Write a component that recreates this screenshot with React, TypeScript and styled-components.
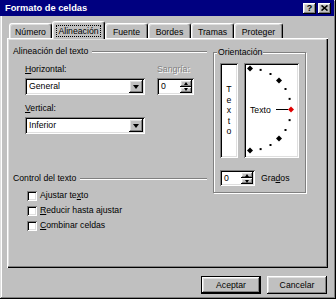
import { createGlobalStyle, css, styled } from "styled-components";

const GlobalStyle = createGlobalStyle`
  html, body {
    margin: 0;
    padding: 0;
    background: #c0c0c0;
  }
  body {
    font-family: "Liberation Sans", Arial, sans-serif;
    font-size: 8.7px;
    color: #000;
  }
`;

const raised = css`
  box-shadow: inset -1px -1px #000, inset 1px 1px #fff, inset -2px -2px #808080, inset 2px 2px #dfdfdf;
`;

const sunken = css`
  box-shadow: inset 1px 1px #808080, inset -1px -1px #fff, inset 2px 2px #000, inset -2px -2px #dfdfdf;
`;

const Window = styled.div`
  width: 336px;
  height: 299px;
  box-sizing: border-box;
  padding: 0 2px 2px 0;
  background: #c0c0c0;
  box-shadow: inset -1px -1px #000, inset 1px 1px #dfdfdf, inset -2px -2px #808080, inset 2px 2px #fff;
  display: flex;
  flex-direction: column;
`;

const TitleBar = styled.div`
  height: 16px;
  background: #000080;
  color: #fff;
  display: flex;
  align-items: center;
  padding: 0 3px 0 5px;
  font-weight: bold;
  font-size: 9.3px;
`;

const Title = styled.span`
  flex: 1;
  line-height: 16px;
`;

const TitleButtons = styled.div`
  display: flex;
  gap: 2px;
`;

const TitleButton = styled.div`
  width: 13px;
  height: 11px;
  background: #c0c0c0;
  ${raised}
  color: #000;
  display: flex;
  align-items: center;
  justify-content: center;
  font-size: 9px;
  line-height: 11px;
`;

const Body = styled.div`
  flex: 1;
  display: flex;
  flex-direction: column;
  padding: 5px 6px 0 7px;
`;

const TabRow = styled.div`
  display: flex;
  align-items: flex-end;
  height: 17px;
  padding-left: 2px;
  position: relative;
  z-index: 1;
`;

const Tab = styled.div<{ $w: number; $active?: boolean }>`
  width: ${(p) => p.$w}px;
  height: ${(p) => (p.$active ? 18 : 15)}px;
  margin-bottom: ${(p) => (p.$active ? -1 : 0)}px;
  box-sizing: border-box;
  padding-top: ${(p) => (p.$active ? 4 : 3)}px;
  background: #c0c0c0;
  border: 1px solid;
  border-color: #fff #000 transparent #fff;
  border-bottom: none;
  border-radius: 3px 3px 0 0;
  box-shadow: inset -1px 0 #808080, inset 1px 1px #dfdfdf;
  text-align: center;
  line-height: 11px;
`;

const Focus = styled.span`
  outline: 1px dotted #000;
  outline-offset: 0;
  padding: 0 1px;
`;

const Panel = styled.div`
  position: relative;
  z-index: 0;
  width: 321px;
  height: 230px;
  box-sizing: border-box;
  padding: 8px 0 0 6px;
  background: #c0c0c0;
  box-shadow: inset 1px 1px #fff, inset -1px -1px #000, inset -2px -2px #808080, inset 2px 2px #dfdfdf;
  display: grid;
  grid-template-columns: 194px 93px;
  column-gap: 6px;
  align-items: start;
`;

const Column = styled.div`
  display: flex;
  flex-direction: column;
`;

const SectionHeader = styled.div<{ $top?: number }>`
  display: flex;
  align-items: center;
  height: 11px;
  line-height: 11px;
  margin-top: ${(p) => p.$top ?? 0}px;
  &::after {
    content: "";
    flex: 1;
    height: 0;
    margin-left: 4px;
    border-top: 1px solid #808080;
    border-bottom: 1px solid #fff;
  }
`;

const FieldsRow = styled.div<{ $top: number }>`
  display: flex;
  gap: 12px;
  padding-left: 12px;
  margin-top: ${(p) => p.$top}px;
`;

const FieldGroup = styled.div`
  display: flex;
  flex-direction: column;
  gap: 3px;
`;

const Label = styled.span<{ $disabled?: boolean }>`
  line-height: 11px;
  height: 11px;
  white-space: nowrap;
  color: ${(p) => (p.$disabled ? "#808080" : "#000")};
  text-shadow: ${(p) => (p.$disabled ? "1px 1px 0 #fff" : "none")};
`;

const Combo = styled.div`
  width: 120px;
  height: 17px;
  box-sizing: border-box;
  padding: 2px;
  background: #fff;
  ${sunken}
  display: flex;
  align-items: center;
`;

const ComboText = styled.span`
  flex: 1;
  padding-left: 2px;
  line-height: 13px;
`;

const DropButton = styled.div`
  width: 14px;
  height: 13px;
  background: #c0c0c0;
  ${raised}
  display: flex;
  align-items: center;
  justify-content: center;
  &::before {
    content: "";
    border-left: 3.5px solid transparent;
    border-right: 3.5px solid transparent;
    border-top: 4px solid #000;
  }
`;

const Spinner = styled.div<{ $w: number; $h: number }>`
  width: ${(p) => p.$w}px;
  height: ${(p) => p.$h}px;
  box-sizing: border-box;
  padding: 2px;
  background: #fff;
  ${sunken}
  display: flex;
`;

const SpinValue = styled.span`
  flex: 1;
  padding-left: 2px;
  align-self: center;
  line-height: 11px;
`;

const SpinButtons = styled.div`
  width: 12px;
  display: flex;
  flex-direction: column;
`;

const SpinButton = styled.div<{ $down?: boolean }>`
  flex: 1;
  background: #c0c0c0;
  ${raised}
  display: flex;
  align-items: center;
  justify-content: center;
  &::before {
    content: "";
    border-left: 2.5px solid transparent;
    border-right: 2.5px solid transparent;
    ${(p) => (p.$down ? "border-top: 3px solid #000;" : "border-bottom: 3px solid #000;")}
  }
`;

const CheckList = styled.div`
  display: flex;
  flex-direction: column;
  margin-top: 4px;
  padding-left: 14px;
`;

const CheckRow = styled.label`
  height: 15px;
  display: flex;
  align-items: center;
  gap: 3px;
  line-height: 11px;
`;

const CheckBox = styled.span`
  width: 10px;
  height: 10px;
  background: #fff;
  ${sunken}
`;

const Group = styled.div`
  margin-top: 6px;
  border: 1px solid #808080;
  box-shadow: 1px 1px 0 #fff, inset 1px 1px 0 #fff;
  padding: 0 6px 6px 6px;
  display: flex;
  flex-direction: column;
`;

const GroupLabel = styled.span`
  align-self: flex-start;
  margin: -6px 0 0 -3px;
  padding: 0 1px;
  background: #c0c0c0;
  line-height: 11px;
`;

const DialRow = styled.div`
  display: flex;
  gap: 6px;
  margin-top: 5px;
`;

const PreviewBox = styled.div<{ $w: number }>`
  width: ${(p) => p.$w}px;
  height: 95px;
  box-sizing: border-box;
  padding: 2px;
  background: #fff;
  ${sunken}
`;

const VerticalText = styled.div`
  height: 100%;
  display: flex;
  flex-direction: column;
  align-items: center;
  justify-content: center;
  line-height: 10.5px;
`;

const SpinRow = styled.div`
  display: flex;
  align-items: center;
  gap: 6px;
  margin-top: 12px;
`;

const ButtonRow = styled.div`
  display: flex;
  justify-content: flex-end;
  gap: 6px;
  margin-top: 8px;
  padding-right: 1px;
`;

const Button = styled.div<{ $default?: boolean }>`
  width: 60px;
  height: 18px;
  background: #c0c0c0;
  display: flex;
  align-items: center;
  justify-content: center;
  line-height: 11px;
  box-shadow: ${(p) =>
    p.$default
      ? "inset 0 0 0 1px #000, inset -2px -2px #000, inset 2px 2px #fff, inset -3px -3px #808080, inset 3px 3px #dfdfdf"
      : "inset -1px -1px #000, inset 1px 1px #fff, inset -2px -2px #808080, inset 2px 2px #dfdfdf"};
`;

const tabs = [
  { name: "Número", w: 43 },
  { name: "Alineación", w: 53, active: true },
  { name: "Fuente", w: 43 },
  { name: "Bordes", w: 43 },
  { name: "Tramas", w: 43 },
  { name: "Proteger", w: 49 },
];

function Dial() {
  const cx = 4;
  const cy = 44.5;
  const r = 41;
  const marks = [];
  for (let a = -90; a <= 90; a += 15) {
    const rad = (a * Math.PI) / 180;
    const x = cx + r * Math.cos(rad);
    const y = cy + r * Math.sin(rad);
    if (a % 45 === 0) {
      const s = 3;
      marks.push(
        <polygon
          key={a}
          points={`${x},${y - s} ${x + s},${y} ${x},${y + s} ${x - s},${y}`}
          fill={a === 0 ? "#e00000" : "#000"}
        />
      );
    } else {
      marks.push(<rect key={a} x={x - 1} y={y - 1} width={2} height={2} fill="#000" />);
    }
  }
  return (
    <svg width="51" height="91" viewBox="0 0 51 91">
      {marks}
      <text x="4" y="47.5" fontSize="8.7" fontFamily="Liberation Sans, Arial, sans-serif" fill="#000">
        Texto
      </text>
      <line x1="30" y1="44.5" x2="42" y2="44.5" stroke="#000" strokeWidth="1" />
    </svg>
  );
}

export default function App() {
  return (
    <>
      <GlobalStyle />
      <Window>
        <TitleBar>
          <Title>Formato de celdas</Title>
          <TitleButtons>
            <TitleButton>?</TitleButton>
            <TitleButton>
              <svg width="7" height="6" viewBox="0 0 7 6">
                <path d="M0.5 0.5 L6.5 5.5 M6.5 0.5 L0.5 5.5" stroke="#000" strokeWidth="1.6" />
              </svg>
            </TitleButton>
          </TitleButtons>
        </TitleBar>
        <Body>
          <TabRow>
            {tabs.map((t) => (
              <Tab key={t.name} $w={t.w} $active={t.active}>
                {t.active ? <Focus>{t.name}</Focus> : t.name}
              </Tab>
            ))}
          </TabRow>
          <Panel>
            <Column>
              <SectionHeader>Alineación del texto</SectionHeader>
              <FieldsRow $top={7}>
                <FieldGroup>
                  <Label>
                    <u>H</u>orizontal:
                  </Label>
                  <Combo>
                    <ComboText>General</ComboText>
                    <DropButton />
                  </Combo>
                </FieldGroup>
                <FieldGroup>
                  <Label $disabled>Sangría:</Label>
                  <Spinner $w={37} $h={17}>
                    <SpinValue>0</SpinValue>
                    <SpinButtons>
                      <SpinButton />
                      <SpinButton $down />
                    </SpinButtons>
                  </Spinner>
                </FieldGroup>
              </FieldsRow>
              <FieldsRow $top={8}>
                <FieldGroup>
                  <Label>
                    <u>V</u>ertical:
                  </Label>
                  <Combo>
                    <ComboText>Inferior</ComboText>
                    <DropButton />
                  </Combo>
                </FieldGroup>
              </FieldsRow>
              <SectionHeader $top={39}>Control del texto</SectionHeader>
              <CheckList>
                <CheckRow>
                  <CheckBox />
                  <span>
                    Ajustar te<u>x</u>to
                  </span>
                </CheckRow>
                <CheckRow>
                  <CheckBox />
                  <span>
                    <u>R</u>educir hasta ajustar
                  </span>
                </CheckRow>
                <CheckRow>
                  <CheckBox />
                  <span>
                    <u>C</u>ombinar celdas
                  </span>
                </CheckRow>
              </CheckList>
            </Column>
            <Column>
              <Group>
                <GroupLabel>Orientación</GroupLabel>
                <DialRow>
                  <PreviewBox $w={19}>
                    <VerticalText>
                      <span>T</span>
                      <span>e</span>
                      <span>x</span>
                      <span>t</span>
                      <span>o</span>
                    </VerticalText>
                  </PreviewBox>
                  <PreviewBox $w={55}>
                    <Dial />
                  </PreviewBox>
                </DialRow>
                <SpinRow>
                  <Spinner $w={35} $h={16}>
                    <SpinValue>0</SpinValue>
                    <SpinButtons>
                      <SpinButton />
                      <SpinButton $down />
                    </SpinButtons>
                  </Spinner>
                  <Label>
                    Gra<u>d</u>os
                  </Label>
                </SpinRow>
              </Group>
            </Column>
          </Panel>
          <ButtonRow>
            <Button $default>Aceptar</Button>
            <Button>Cancelar</Button>
          </ButtonRow>
        </Body>
      </Window>
    </>
  );
}
